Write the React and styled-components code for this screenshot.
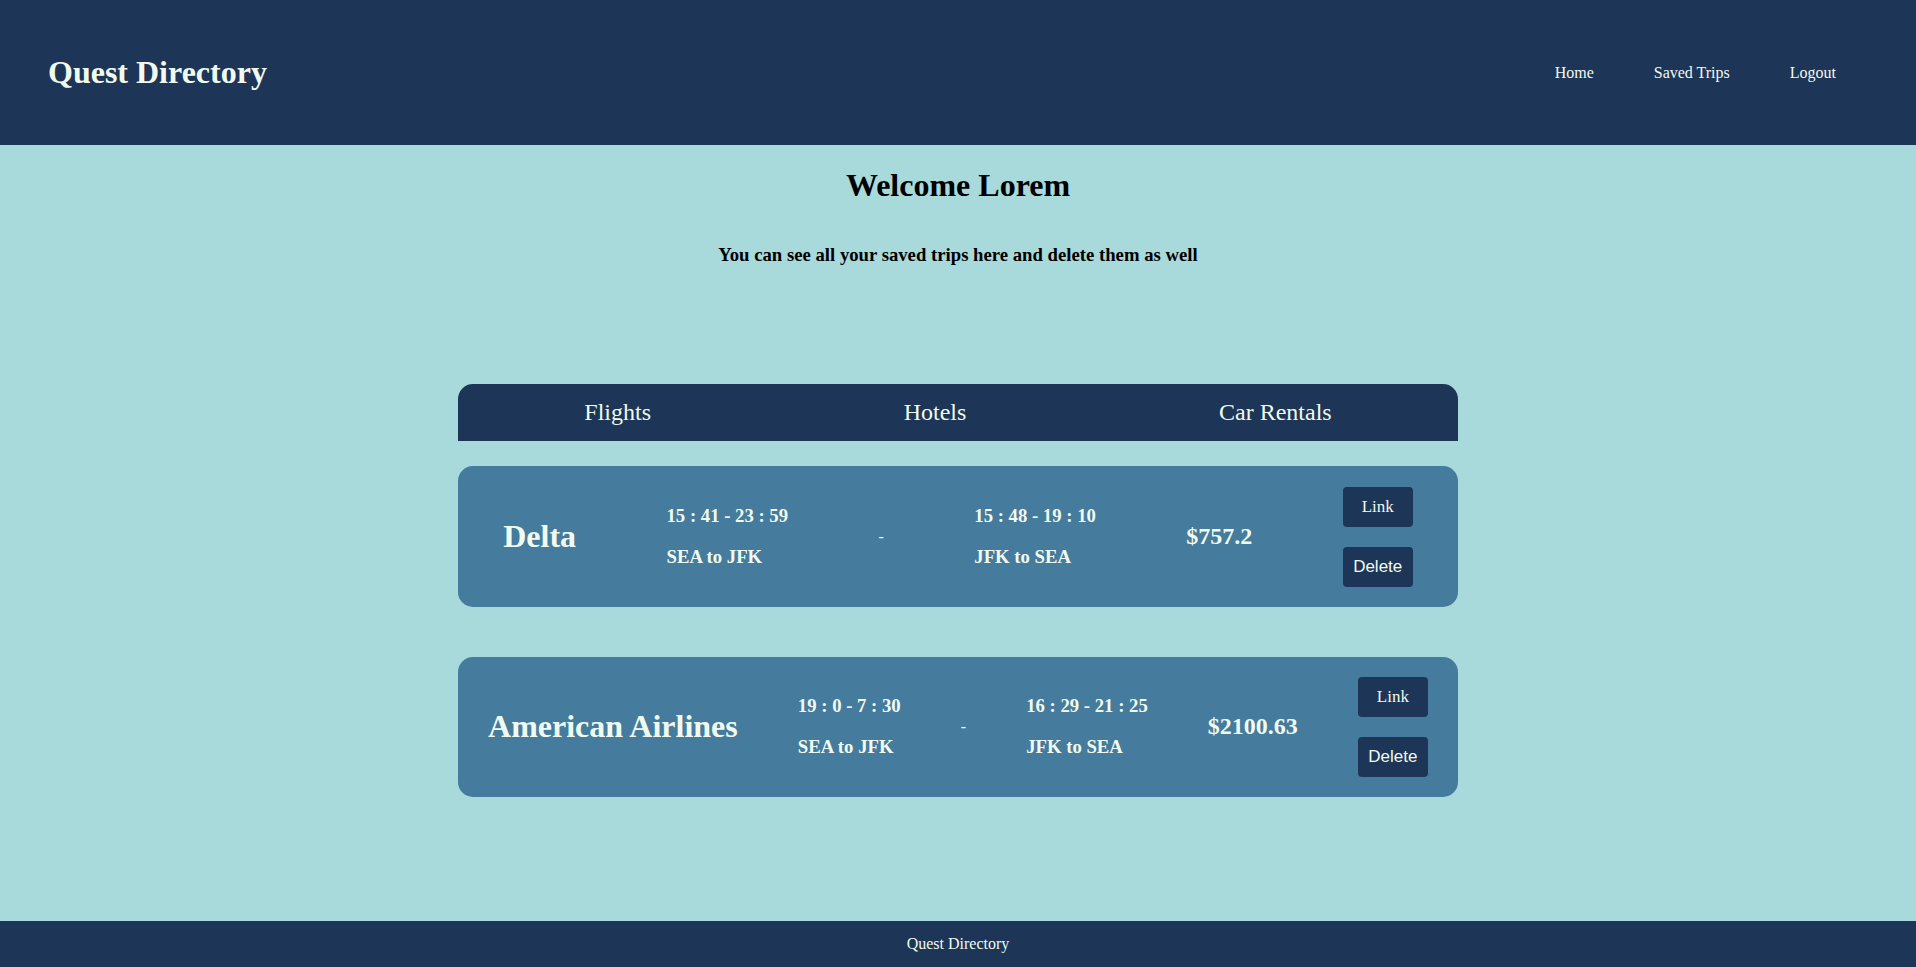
import React from "react";
import styled, { createGlobalStyle } from "styled-components";

const GlobalStyle = createGlobalStyle`
  html, body {
    margin: 0;
    padding: 0;
  }
  body {
    font-family: "Liberation Serif", "Times New Roman", serif;
    background: #a8dadc;
  }
  * { box-sizing: border-box; }
`;

const Page = styled.div`
  min-height: 100vh;
  display: flex;
  flex-direction: column;
`;

const Header = styled.header`
  height: 145px;
  background: #1d3557;
  display: flex;
  align-items: center;
  justify-content: space-between;
  padding: 0 80px 0 48px;
`;

const Logo = styled.h1`
  margin: 0;
  font-size: 32px;
  font-weight: bold;
  color: #f1faee;
`;

const Nav = styled.nav`
  display: flex;
  gap: 60px;
`;

const NavLink = styled.a`
  font-size: 16px;
  color: #f1faee;
  text-decoration: none;
  cursor: pointer;
`;

const Main = styled.main`
  flex: 1;
  display: flex;
  flex-direction: column;
  align-items: center;
`;

const Welcome = styled.h1`
  margin: 22px 0 21px;
  font-size: 32px;
  font-weight: bold;
  color: #000;
`;

const Subtitle = styled.h3`
  margin: 18.72px 0;
  font-size: 18.72px;
  font-weight: bold;
  color: #000;
`;

const Trips = styled.section`
  width: 1000px;
  margin-top: 100px;
  display: flex;
  flex-direction: column;
`;

const Tabs = styled.div`
  height: 57px;
  background: #1d3557;
  border-radius: 15px 15px 0 0;
  display: flex;
  justify-content: space-around;
  align-items: center;
`;

const Tab = styled.span`
  font-size: 24px;
  color: #f1faee;
  cursor: pointer;
`;

const CardList = styled.div`
  margin-top: 25px;
  display: flex;
  flex-direction: column;
  gap: 50px;
`;

const Card = styled.div`
  background: #457b9d;
  border-radius: 15px;
  padding: 20px 0;
  display: flex;
  justify-content: space-around;
  align-items: center;
  color: #f1faee;
`;

const Airline = styled.h1`
  margin: 21.44px 0;
  font-size: 32px;
  font-weight: bold;
`;

const Leg = styled.div`
  display: flex;
  flex-direction: column;
`;

const LegLine = styled.h3`
  margin: 18.72px 0 0;
  font-size: 18.72px;
  font-weight: bold;
  &:last-child {
    margin-bottom: 18.72px;
  }
`;

const Dash = styled.p`
  margin: 16px 0;
  font-size: 16px;
`;

const Price = styled.h2`
  margin: 19.92px 0;
  font-size: 24px;
  font-weight: bold;
`;

const Actions = styled.div`
  display: flex;
  flex-direction: column;
  gap: 20px;
`;

const ActionButton = styled.button`
  width: 70px;
  height: 40px;
  border: none;
  border-radius: 4px;
  background: #1d3557;
  color: #f1faee;
  font-size: 17px;
  font-family: ${(p) =>
    p.$serif
      ? `"Liberation Serif", "Times New Roman", serif`
      : `"Liberation Sans", Arial, sans-serif`};
  display: flex;
  align-items: center;
  justify-content: center;
  padding: 0;
  cursor: pointer;
`;

const Footer = styled.footer`
  height: 46px;
  background: #1d3557;
  display: flex;
  align-items: center;
  justify-content: center;
  color: #f1faee;
  font-size: 16px;
`;

const trips = [
  {
    airline: "Delta",
    out: "15 : 41 - 23 : 59",
    outRoute: "SEA to JFK",
    back: "15 : 48 - 19 : 10",
    backRoute: "JFK to SEA",
    price: "$757.2",
  },
  {
    airline: "American Airlines",
    out: "19 : 0 - 7 : 30",
    outRoute: "SEA to JFK",
    back: "16 : 29 - 21 : 25",
    backRoute: "JFK to SEA",
    price: "$2100.63",
  },
];

export default function App() {
  return (
    <>
      <GlobalStyle />
      <Page>
        <Header>
          <Logo>Quest Directory</Logo>
          <Nav>
            <NavLink>Home</NavLink>
            <NavLink>Saved Trips</NavLink>
            <NavLink>Logout</NavLink>
          </Nav>
        </Header>
        <Main>
          <Welcome>Welcome Lorem</Welcome>
          <Subtitle>You can see all your saved trips here and delete them as well</Subtitle>
          <Trips>
            <Tabs>
              <Tab>Flights</Tab>
              <Tab>Hotels</Tab>
              <Tab>Car Rentals</Tab>
            </Tabs>
            <CardList>
              {trips.map((t) => (
                <Card key={t.airline}>
                  <Airline>{t.airline}</Airline>
                  <Leg>
                    <LegLine>{t.out}</LegLine>
                    <LegLine>{t.outRoute}</LegLine>
                  </Leg>
                  <Dash>-</Dash>
                  <Leg>
                    <LegLine>{t.back}</LegLine>
                    <LegLine>{t.backRoute}</LegLine>
                  </Leg>
                  <Price>{t.price}</Price>
                  <Actions>
                    <ActionButton $serif>Link</ActionButton>
                    <ActionButton>Delete</ActionButton>
                  </Actions>
                </Card>
              ))}
            </CardList>
          </Trips>
        </Main>
        <Footer>Quest Directory</Footer>
      </Page>
    </>
  );
}
